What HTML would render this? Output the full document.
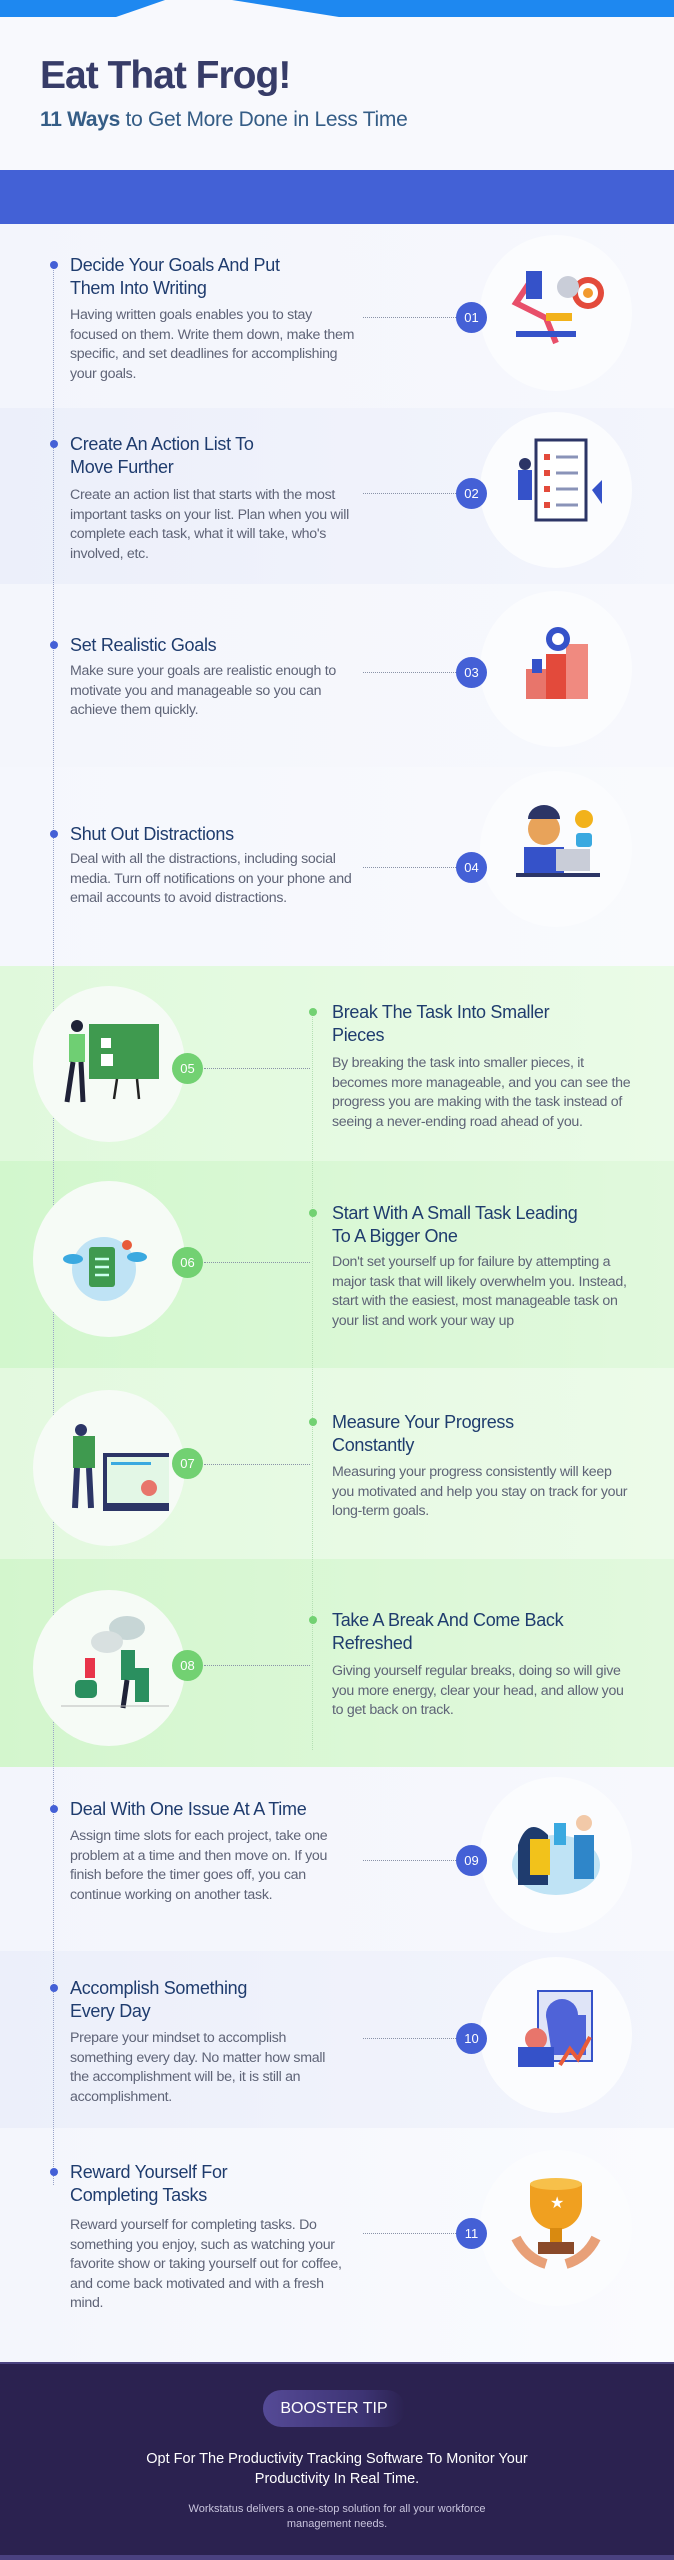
<!DOCTYPE html>
<html><head><meta charset="utf-8"><style>
*{margin:0;padding:0;box-sizing:border-box}
body{width:674px;height:2560px;position:relative;overflow:hidden;background:#f8f9fd;font-family:"Liberation Sans",sans-serif}
.a{position:absolute}
.sec{position:absolute;left:0;width:674px}
.t{position:absolute;font-size:18px;line-height:23px;color:#1f3c6e;letter-spacing:-0.3px}
.b{position:absolute;font-size:14.2px;line-height:19.6px;color:#5f6477;letter-spacing:-0.3px}
.n{position:absolute;width:31px;height:31px;border-radius:50%;color:#fff;font-size:13px;line-height:31px;text-align:center;z-index:5}
.nb{background:#4460d6}.ng{background:#72d172}
.dl{position:absolute;height:0;border-top:1.5px dotted #8a93a8}
.dot{position:absolute;width:8px;height:8px;border-radius:50%}
.ill{position:absolute;width:152px;height:156px;border-radius:50%;background:#fbfcfe}
.ill svg{position:absolute;left:16px;top:18px}
</style></head><body>
<div class="a" style="left:0;top:0;width:674px;height:17px;background:#1e88f0"></div>
<div class="a" style="left:116px;top:0;width:223px;height:17px;background:#f8f9fd;clip-path:polygon(22% 0,52% 0,100% 100%,0 100%)"></div>
<div class="a" style="left:40px;top:54px;font-size:39px;font-weight:bold;color:#373c68;letter-spacing:-1px">Eat That Frog!</div>
<div class="a" style="left:40px;top:108px;font-size:21px;color:#355d86;letter-spacing:-0.3px"><b>11 Ways</b> to Get More Done in Less Time</div>
<div class="a" style="left:0;top:170px;width:674px;height:54px;background:#4361d6"></div>

<div class="sec" style="top:224px;height:184px;background:linear-gradient(90deg,#f3f5fc,#f7f8fd)"></div>
<div class="sec" style="top:408px;height:176px;background:linear-gradient(90deg,#eceffa,#f3f5fc)"></div>
<div class="sec" style="top:584px;height:183px;background:linear-gradient(90deg,#f4f6fc,#f7f8fd)"></div>
<div class="sec" style="top:767px;height:199px;background:linear-gradient(90deg,#f5f7fd,#f9fafd)"></div>
<div class="sec" style="top:966px;height:195px;background:linear-gradient(90deg,#e0f9dc,#eafbe7)"></div>
<div class="sec" style="top:1161px;height:207px;background:linear-gradient(90deg,#d2f7cd,#e1f9dd)"></div>
<div class="sec" style="top:1368px;height:191px;background:linear-gradient(90deg,#e3f9df,#ecfbe9)"></div>
<div class="sec" style="top:1559px;height:208px;background:linear-gradient(90deg,#d3f6cd,#e2f9de)"></div>
<div class="sec" style="top:1767px;height:184px;background:linear-gradient(90deg,#f3f5fc,#f7f8fd)"></div>
<div class="sec" style="top:1951px;height:177px;background:linear-gradient(90deg,#eceffa,#f3f5fc)"></div>
<div class="sec" style="top:2128px;height:234px;background:linear-gradient(90deg,#f4f6fc,#fafbfe)"></div>

<div class="a" style="left:53px;top:265px;height:1920px;border-left:1.5px dotted #9aa4c8"></div>
<div class="a" style="left:312px;top:1010px;height:740px;border-left:1.5px dotted #b5dfb3"></div>

<div class="dot" style="left:50px;top:261px;background:#4460d6"></div>
<div class="t" style="left:70px;top:254px">Decide Your Goals And Put<br>Them Into Writing</div>
<div class="b" style="left:70px;top:306px;width:286px">Having written goals enables you to stay focused on them. Write them down, make them specific, and set deadlines for accomplishing your goals.</div>
<div class="dl" style="left:363px;top:317px;width:93px"></div>
<div class="n nb" style="left:456px;top:302px">01</div>
<div class="ill" style="left:480px;top:235px"><svg width="120" height="120"><circle cx="92" cy="40" r="16" fill="#e34a3b"/><circle cx="92" cy="40" r="10" fill="#fff"/><circle cx="92" cy="40" r="5" fill="#f29a2e"/><circle cx="72" cy="34" r="11" fill="#c9cdd8"/><path d="M40 20l-20 30 30 15 10 25" stroke="#e84f6a" stroke-width="6" fill="none"/><rect x="30" y="18" width="16" height="28" fill="#3552c9"/><rect x="20" y="78" width="60" height="6" fill="#3552c9"/><rect x="50" y="60" width="26" height="8" fill="#f2b21b"/></svg></div>

<div class="dot" style="left:50px;top:440px;background:#4460d6"></div>
<div class="t" style="left:70px;top:433px">Create An Action List To<br>Move Further</div>
<div class="b" style="left:70px;top:486px;width:296px">Create an action list that starts with the most important tasks on your list. Plan when you will complete each task, what it will take, who's involved, etc.</div>
<div class="dl" style="left:363px;top:493px;width:93px"></div>
<div class="n nb" style="left:456px;top:478px">02</div>
<div class="ill" style="left:480px;top:412px"><svg width="120" height="120"><rect x="40" y="10" width="50" height="80" fill="#fff" stroke="#2c3566" stroke-width="3"/><g fill="#e34a3b"><rect x="48" y="24" width="6" height="6"/><rect x="48" y="40" width="6" height="6"/><rect x="48" y="56" width="6" height="6"/><rect x="48" y="72" width="6" height="6"/></g><g stroke="#8a93b8" stroke-width="3"><path d="M60 27h22M60 43h22M60 59h22M60 75h22"/></g><rect x="22" y="40" width="14" height="30" fill="#3552c9"/><circle cx="29" cy="34" r="6" fill="#2c3566"/><path d="M96 60l10-10v24z" fill="#3552c9"/></svg></div>

<div class="dot" style="left:50px;top:641px;background:#4460d6"></div>
<div class="t" style="left:70px;top:634px">Set Realistic Goals</div>
<div class="b" style="left:70px;top:662px;width:296px">Make sure your goals are realistic enough to motivate you and manageable so you can achieve them quickly.</div>
<div class="dl" style="left:363px;top:672px;width:93px"></div>
<div class="n nb" style="left:456px;top:657px">03</div>
<div class="ill" style="left:480px;top:591px"><svg width="120" height="120"><rect x="30" y="60" width="20" height="30" fill="#e8756b"/><rect x="50" y="45" width="20" height="45" fill="#e34a3b"/><rect x="70" y="35" width="22" height="55" fill="#f08a80"/><circle cx="62" cy="30" r="12" fill="#3552c9"/><circle cx="62" cy="30" r="6" fill="#fff"/><rect x="36" y="50" width="10" height="14" fill="#3552c9"/></svg></div>

<div class="dot" style="left:50px;top:830px;background:#4460d6"></div>
<div class="t" style="left:70px;top:823px">Shut Out Distractions</div>
<div class="b" style="left:70px;top:850px;width:296px">Deal with all the distractions, including social media. Turn off notifications on your phone and email accounts to avoid distractions.</div>
<div class="dl" style="left:363px;top:867px;width:93px"></div>
<div class="n nb" style="left:456px;top:852px">04</div>
<div class="ill" style="left:480px;top:771px"><svg width="120" height="120"><circle cx="48" cy="40" r="16" fill="#e8a35a"/><path d="M32 30a16 14 0 0 1 32 0z" fill="#2c3566"/><rect x="28" y="58" width="40" height="26" fill="#3552c9"/><rect x="60" y="60" width="34" height="22" fill="#c9cdd8"/><rect x="20" y="84" width="84" height="4" fill="#2c3566"/><circle cx="88" cy="30" r="9" fill="#f2b21b"/><rect x="80" y="44" width="16" height="14" rx="3" fill="#3aa9e0"/></svg></div>

<div class="ill" style="left:33px;top:986px;background:#f6fbf6"><svg width="120" height="120"><rect x="40" y="20" width="70" height="55" fill="#3f9a4f"/><rect x="52" y="34" width="10" height="10" fill="#fff"/><rect x="52" y="50" width="12" height="12" fill="#fff"/><path d="M65 95l3-20M90 95l-2-20" stroke="#222" stroke-width="2.5"/><rect x="20" y="30" width="16" height="28" fill="#6fcf73"/><circle cx="28" cy="22" r="6" fill="#1f2237"/><path d="M24 58l-6 40M32 58l2 40" stroke="#1f2237" stroke-width="5"/></svg></div>
<div class="dot" style="left:309px;top:1008px;background:#72d172"></div>
<div class="t" style="left:332px;top:1001px">Break The Task Into Smaller<br>Pieces</div>
<div class="b" style="left:332px;top:1054px;width:300px">By breaking the task into smaller pieces, it becomes more manageable, and you can see the progress you are making with the task instead of seeing a never-ending road ahead of you.</div>
<div class="dl" style="left:204px;top:1068px;width:106px"></div>
<div class="n ng" style="left:172px;top:1053px">05</div>

<div class="ill" style="left:33px;top:1181px;background:#f6fbf6"><svg width="120" height="120"><circle cx="55" cy="70" r="32" fill="#bfe3f5"/><rect x="40" y="48" width="26" height="40" rx="3" fill="#3f9a4f"/><path d="M46 60h14M46 68h14M46 76h14" stroke="#cfe" stroke-width="2.5"/><circle cx="78" cy="46" r="5" fill="#e85b3a"/><ellipse cx="24" cy="60" rx="10" ry="5" fill="#3aa9e0"/><ellipse cx="88" cy="58" rx="10" ry="5" fill="#3aa9e0"/></svg></div>
<div class="dot" style="left:309px;top:1209px;background:#72d172"></div>
<div class="t" style="left:332px;top:1202px">Start With A Small Task Leading<br>To A Bigger One</div>
<div class="b" style="left:332px;top:1253px;width:310px">Don't set yourself up for failure by attempting a major task that will likely overwhelm you. Instead, start with the easiest, most manageable task on your list and work your way up</div>
<div class="dl" style="left:204px;top:1262px;width:106px"></div>
<div class="n ng" style="left:172px;top:1247px">06</div>

<div class="ill" style="left:33px;top:1390px;background:#f6fbf6"><svg width="120" height="120"><rect x="54" y="45" width="74" height="58" fill="#2c3566"/><rect x="58" y="49" width="66" height="46" fill="#e3f7e6"/><rect x="62" y="54" width="40" height="3" fill="#3aa9e0"/><circle cx="100" cy="80" r="8" fill="#e8756b"/><rect x="24" y="28" width="22" height="32" fill="#3f9a4f"/><circle cx="32" cy="22" r="6" fill="#2c3566"/><path d="M28 60l-2 40M40 60l2 40" stroke="#2c3566" stroke-width="6"/></svg></div>
<div class="dot" style="left:309px;top:1418px;background:#72d172"></div>
<div class="t" style="left:332px;top:1411px">Measure Your Progress<br>Constantly</div>
<div class="b" style="left:332px;top:1463px;width:300px">Measuring your progress consistently will keep you motivated and help you stay on track for your long-term goals.</div>
<div class="dl" style="left:204px;top:1464px;width:106px"></div>
<div class="n ng" style="left:172px;top:1448px">07</div>

<div class="ill" style="left:33px;top:1590px;background:#f6fbf6"><svg width="120" height="120"><ellipse cx="78" cy="20" rx="18" ry="12" fill="#c7d6d6"/><ellipse cx="58" cy="34" rx="16" ry="11" fill="#d8e0e0"/><rect x="26" y="72" width="22" height="18" rx="5" fill="#2a8f5f"/><rect x="36" y="50" width="10" height="20" fill="#e8344a"/><rect x="86" y="60" width="14" height="34" fill="#2a8f5f"/><rect x="72" y="42" width="14" height="30" fill="#2a8f5f"/><path d="M78 72l-4 28" stroke="#1f2237" stroke-width="5"/><path d="M12 98h110" stroke="#bbb"/></svg></div>
<div class="dot" style="left:309px;top:1616px;background:#72d172"></div>
<div class="t" style="left:332px;top:1609px">Take A Break And Come Back<br>Refreshed</div>
<div class="b" style="left:332px;top:1662px;width:305px">Giving yourself regular breaks, doing so will give you more energy, clear your head, and allow you to get back on track.</div>
<div class="dl" style="left:204px;top:1665px;width:106px"></div>
<div class="n ng" style="left:172px;top:1650px">08</div>

<div class="dot" style="left:50px;top:1805px;background:#4460d6"></div>
<div class="t" style="left:70px;top:1798px">Deal With One Issue At A Time</div>
<div class="b" style="left:70px;top:1827px;width:262px">Assign time slots for each project, take one problem at a time and then move on. If you finish before the timer goes off, you can continue working on another task.</div>
<div class="dl" style="left:363px;top:1860px;width:93px"></div>
<div class="n nb" style="left:456px;top:1845px">09</div>
<div class="ill" style="left:480px;top:1777px"><svg width="120" height="120"><ellipse cx="60" cy="70" rx="44" ry="30" fill="#bfe3f5"/><path d="M22 50q10-30 30-10v50H22z" fill="#1f3c6e"/><rect x="34" y="44" width="20" height="36" fill="#f2c21b"/><rect x="78" y="40" width="20" height="44" fill="#2f86c9"/><circle cx="88" cy="28" r="8" fill="#f2c9a8"/><rect x="58" y="28" width="12" height="22" fill="#3aa9e0"/></svg></div>

<div class="dot" style="left:50px;top:1984px;background:#4460d6"></div>
<div class="t" style="left:70px;top:1977px">Accomplish Something<br>Every Day</div>
<div class="b" style="left:70px;top:2029px;width:275px">Prepare your mindset to accomplish something every day. No matter how small the accomplishment will be, it is still an accomplishment.</div>
<div class="dl" style="left:363px;top:2038px;width:93px"></div>
<div class="n nb" style="left:456px;top:2023px">10</div>
<div class="ill" style="left:480px;top:1957px"><svg width="120" height="120"><rect x="42" y="16" width="54" height="70" fill="#dfe4f7" stroke="#3552c9" stroke-width="2"/><circle cx="66" cy="40" r="16" fill="#4f63d8"/><path d="M50 40h40v40H56z" fill="#4f63d8"/><circle cx="40" cy="64" r="11" fill="#e8756b"/><rect x="22" y="72" width="36" height="20" fill="#3552c9"/><path d="M64 90l10-16 8 10 12-22" stroke="#e85b3a" stroke-width="4" fill="none"/></svg></div>

<div class="dot" style="left:50px;top:2168px;background:#4460d6"></div>
<div class="t" style="left:70px;top:2161px">Reward Yourself For<br>Completing Tasks</div>
<div class="b" style="left:70px;top:2216px;width:285px">Reward yourself for completing tasks. Do something you enjoy, such as watching your favorite show or taking yourself out for coffee, and come back motivated and with a fresh mind.</div>
<div class="dl" style="left:363px;top:2233px;width:93px"></div>
<div class="n nb" style="left:456px;top:2218px">11</div>
<div class="ill" style="left:480px;top:2150px"><svg width="120" height="120"><path d="M34 16h52v20a26 26 0 0 1-52 0z" fill="#f0a020"/><ellipse cx="60" cy="16" rx="26" ry="6" fill="#f7c04a"/><rect x="54" y="60" width="12" height="14" fill="#d98a10"/><rect x="42" y="74" width="36" height="12" fill="#8a4a2a"/><path d="M20 70q10 20 30 26M100 70q-10 20-30 26" stroke="#e8a078" stroke-width="10" fill="none"/><text x="54" y="40" fill="#fff" font-size="16">★</text></svg></div>

<div class="a" style="left:0;top:2362px;width:674px;height:198px;background:#2b2250;border-top:2px solid #4b4380"></div>
<div class="a" style="left:0;top:2555px;width:674px;height:5px;background:#4a4180"></div>
<div class="a" style="left:263px;top:2390px;width:142px;height:37px;border-radius:19px;background:linear-gradient(90deg,#554a96,#3d3474 70%,rgba(43,34,80,0));color:#fff;font-size:16px;line-height:37px;text-align:center">BOOSTER TIP</div>
<div class="a" style="left:0;top:2449px;width:674px;text-align:center;color:#fff;font-size:14.5px;line-height:20px">Opt For The Productivity Tracking Software To Monitor Your<br>Productivity In Real Time.</div>
<div class="a" style="left:0;top:2502px;width:674px;text-align:center;color:#c8c4dd;font-size:11px;line-height:15px">Workstatus delivers a one-stop solution for all your workforce<br>management needs.</div>
</body></html>
